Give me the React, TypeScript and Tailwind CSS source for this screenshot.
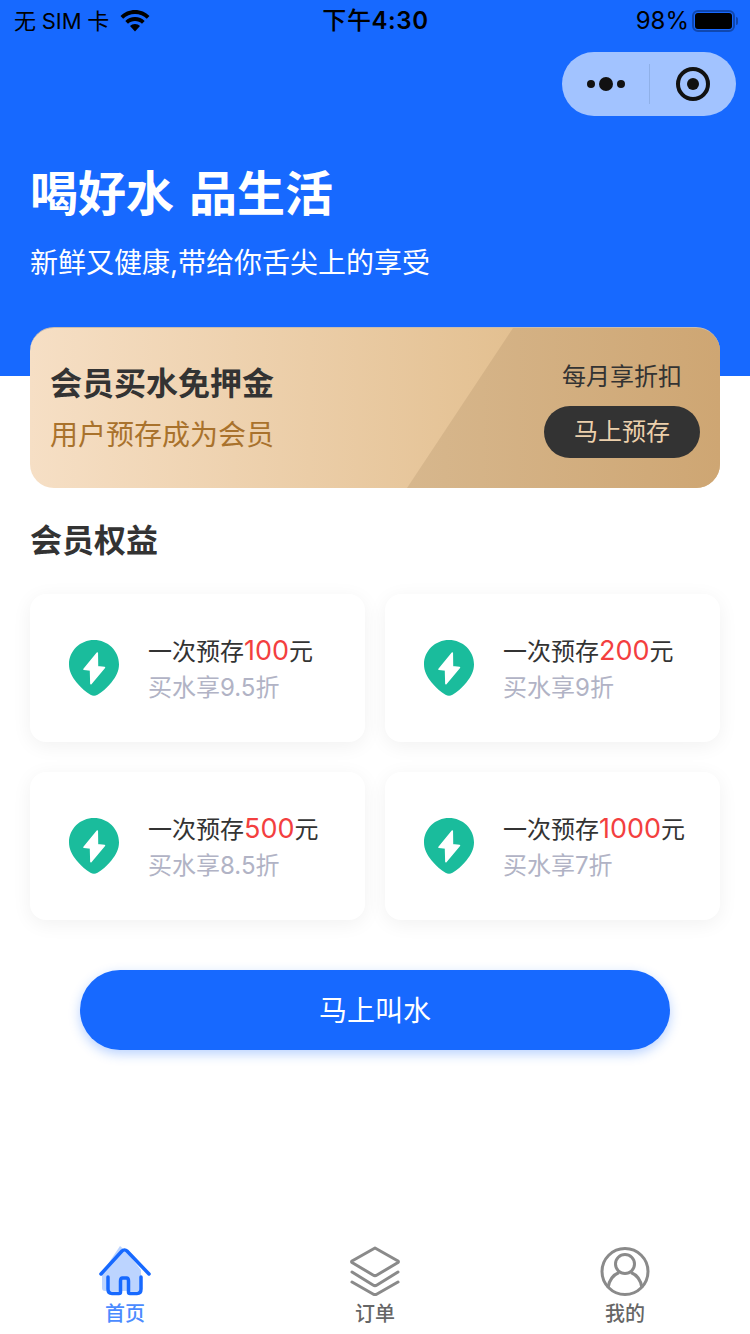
import React from "react";

const font = { fontFamily: "Inter, 'Noto Sans CJK SC', sans-serif" };

function Bolt() {
  return (
    <svg width="50" height="56" viewBox="0 0 50 56">
      <path d="M25 0C11.200 0 0 10.800 0 24.200c0 7 3 12.600 7.600 18.200C12 47.700 17 52 21.500 54.800c2.200 1.400 4.800 1.400 7 0C33 52 38 47.700 42.400 42.400 47 36.800 50 31.200 50 24.200 50 10.800 38.800 0 25 0z" fill="#1abc9c" />
      <path d="M28.300 13 15 29.300l6.500.7.400 13.800L35.500 27.500l-7-.8z" fill="#fff" stroke="#fff" strokeWidth="1.500" strokeLinejoin="round" />
    </svg>
  );
}

function Card({ amount, rate }: { amount: string; rate: string }) {
  return (
    <div className="h-[148px] rounded-[16px] bg-white shadow-[0_4px_20px_rgba(0,0,0,0.06)] flex items-center pl-[39px]">
      <Bolt />
      <div className="ml-[29px] pt-[2px] flex flex-col">
        <div className="text-[24px] leading-[36px] text-[#333333] whitespace-nowrap">
          一次预存<span className="text-[#f33f3f] text-[27px]">{amount}</span>元
        </div>
        <div className="text-[24px] leading-[36px] text-[#b1b3c5] whitespace-nowrap">买水享{rate}折</div>
      </div>
    </div>
  );
}

export default function App() {
  return (
    <div className="w-[750px] h-[1334px] bg-white overflow-hidden flex flex-col" style={font}>
      <div className="h-[376px] shrink-0 bg-[#1769ff] flex flex-col">
        <div className="h-[40px] pt-[2px] flex items-center justify-between pl-[14px] pr-[12px] text-black">
          <div className="flex items-center w-[200px]">
            <span className="whitespace-nowrap text-[22px] [word-spacing:-0.5px]">无 SIM 卡</span>
            <svg className="ml-[11px]" width="30" height="22" viewBox="0 0 30 22">
              <path d="M15 0C9.300 0 4.200 2.300.5 6l2.700 2.800C6.200 5.800 10.400 4 15 4s8.800 1.800 11.800 4.800L29.500 6C25.800 2.300 20.700 0 15 0z" />
              <path d="M15 7c-3.800 0-7.200 1.500-9.700 4l2.700 2.800C9.800 12 12.300 11 15 11s5.200 1 7 2.800l2.700-2.800C22.200 8.500 18.800 7 15 7z" />
              <path d="M15 14c-2 0-3.700.8-5 2l5 5.500 5-5.500c-1.300-1.200-3-2-5-2z" />
            </svg>
          </div>
          <span className="font-medium text-[24px] tracking-[0.6px] whitespace-nowrap pr-[1px]">下午<span className="font-semibold">4:30</span></span>
          <div className="flex items-center justify-end w-[200px]">
            <span className="text-[24px]">98%</span>
            <div className="ml-[3px] w-[43px] h-[22px] rounded-[6px] border-2 border-[#0f47b0] p-[1px] flex">
              <div className="flex-1 bg-black rounded-[3px]" />
            </div>
            <div className="ml-[1px] w-[2px] h-[8px] bg-[#0f47b0] rounded-r-[2px]" />
          </div>
        </div>
        <div className="mt-[12px] self-end mr-[14px] w-[174px] h-[64px] rounded-[32px] bg-[#a2c3ff] flex items-center">
          <div className="w-[87px] flex items-center justify-center gap-[4px] pl-[1px]">
            <div className="w-[8px] h-[8px] rounded-full bg-[#111111]" />
            <div className="w-[14px] h-[14px] rounded-full bg-[#111111]" />
            <div className="w-[8px] h-[8px] rounded-full bg-[#111111]" />
          </div>
          <div className="w-px h-[40px] bg-[#8fb0e8]" />
          <div className="flex-1 flex items-center justify-center">
            <div className="w-[34px] h-[34px] rounded-full border-[4px] border-[#111111] flex items-center justify-center">
              <div className="w-[12px] h-[12px] rounded-full bg-[#111111]" />
            </div>
          </div>
        </div>
        <h1 className="mt-[46px] ml-[30px] text-[48px] leading-[64px] font-semibold [word-spacing:3px] text-white whitespace-nowrap">喝好水 品生活</h1>
        <p className="mt-[17px] ml-[30px] text-[28px] leading-[40px] text-white whitespace-nowrap">新鲜又健康,带给你舌尖上的享受</p>
      </div>

      <div className="relative mx-[30px] -mt-[49px] h-[161px] shrink-0 rounded-[24px] overflow-hidden border-t border-[#c9bdb0] bg-[linear-gradient(90deg,#f6dfc5_0%,#e3c091_70%,#dcb683_100%)] flex items-center justify-between pl-[20px] pr-[20px]">
        <div className="absolute inset-0 bg-[linear-gradient(90deg,#d7b78d_55%,#cea673_100%)] [clip-path:polygon(483px_0,100%_0,100%_100%,377px_100%)]" />
        <div className="relative flex flex-col">
          <div className="text-[32px] leading-[44px] font-semibold text-[#333333] whitespace-nowrap">会员买水免押金</div>
          <div className="mt-[9px] text-[28px] leading-[40px] text-[#a9722c] whitespace-nowrap">用户预存成为会员</div>
        </div>
        <div className="relative w-[156px] flex flex-col items-center">
          <div className="text-[24px] leading-[36px] text-[#333333] whitespace-nowrap">每月享折扣</div>
          <div className="mt-[11px] w-[156px] h-[52px] rounded-[26px] bg-[#333333] text-[#ecd0ac] text-[24px] flex items-center justify-center whitespace-nowrap">马上预存</div>
        </div>
      </div>

      <h2 className="mt-[30px] ml-[30px] text-[32px] leading-[46px] font-semibold text-[#333333]">会员权益</h2>

      <div className="mt-[30px] mx-[30px] grid grid-cols-2 gap-x-[20px] gap-y-[30px]">
        <Card amount="100" rate="9.5" />
        <Card amount="200" rate="9" />
        <Card amount="500" rate="8.5" />
        <Card amount="1000" rate="7" />
      </div>

      <div className="mt-[50px] mx-[80px] h-[80px] pt-[2px] rounded-[40px] bg-[#1769ff] text-white text-[28px] flex items-center justify-center shadow-[0_4px_12px_rgba(23,105,255,0.3)]">马上叫水</div>

      <div className="mt-auto h-[104px] flex">
        <div className="flex-1 flex flex-col items-center pt-[16px]">
          <svg width="52" height="50" viewBox="0 0 52 50">
            <path d="M21 0 3 27v15a3 3 0 0 0 3 3h36V24L28 6z" fill="#bcd4ff" />
            <path d="M2 28 23 5c1.500-1.500 3.500-1.500 5 0l22 23" fill="none" stroke="#1769ff" strokeWidth="3.500" strokeLinecap="round" strokeLinejoin="round" />
            <path d="M9 31v12c0 3 1.500 4.500 4 4.500h7c1 0 1.500-.5 1.500-1.500V35c0-2 1-3 2-3h4c1 0 2 1 2 3v11c0 1 .5 1.500 1.500 1.500h7c2.500 0 4-1.500 4-4.500V31" fill="none" stroke="#1769ff" strokeWidth="3.500" strokeLinecap="round" />
          </svg>
          <span className="text-[20px] leading-[26px] font-medium text-[#4b8bff] mt-[5px]">首页</span>
        </div>
        <div className="flex-1 flex flex-col items-center pt-[16px]">
          <svg width="52" height="50" viewBox="0 0 52 50" fill="none" stroke="#8a8a8a" strokeWidth="3" strokeLinejoin="round" strokeLinecap="round">
            <path d="M26 2 49 15c.6.5.6 1 0 1.500L28 29c-1.300.8-2.700.8-4 0L3 16.500c-.6-.5-.6-1 0-1.500z" />
            <path d="M3 26l21 13c1.300.8 2.700.8 4 0l21-13" />
            <path d="M3 36l21 12c1.300.8 2.700.8 4 0l21-12" />
          </svg>
          <span className="text-[20px] leading-[26px] font-medium text-[#666666] mt-[5px]">订单</span>
        </div>
        <div className="flex-1 flex flex-col items-center pt-[16px]">
          <svg width="52" height="50" viewBox="0 0 52 50" fill="none" stroke="#8a8a8a" strokeWidth="3">
            <circle cx="26" cy="25.500" r="23" />
            <circle cx="26" cy="18" r="9.500" />
            <path d="M9 42c1-8 5-13 11-15.500M43 42c-1-8-5-13-11-15.500" />
          </svg>
          <span className="text-[20px] leading-[26px] font-medium text-[#666666] mt-[5px]">我的</span>
        </div>
      </div>
    </div>
  );
}
